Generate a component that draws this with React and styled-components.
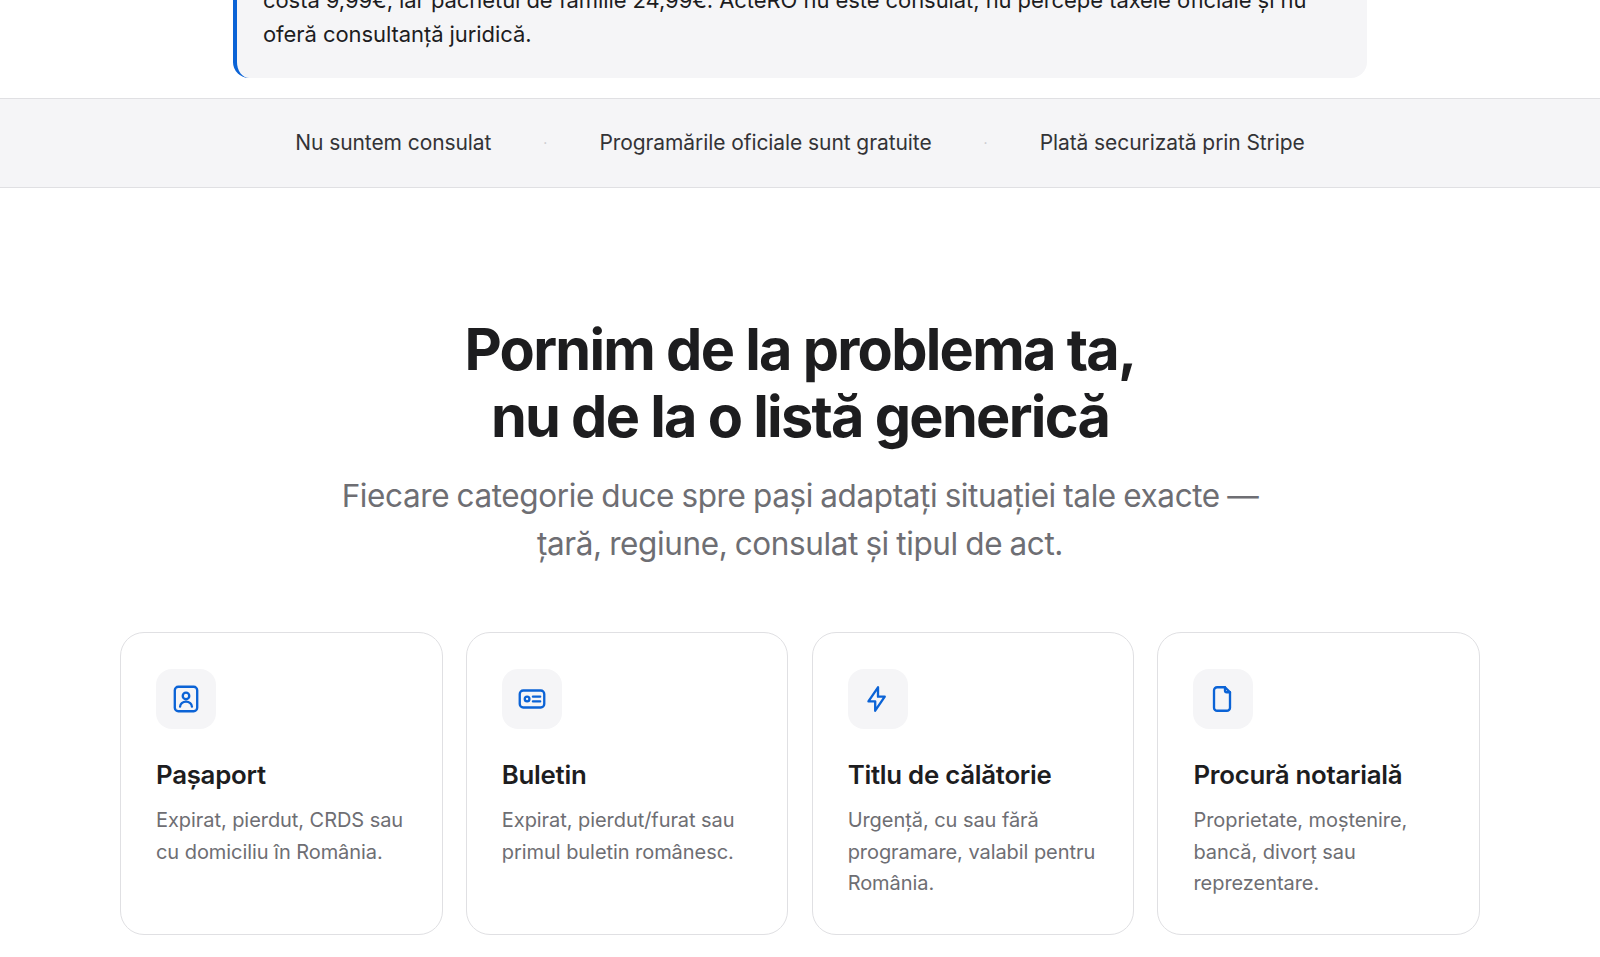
import React from "react";
import styled, { createGlobalStyle } from "styled-components";

const GlobalStyle = createGlobalStyle`
  * { box-sizing: border-box; }
  html, body { margin: 0; background: #fff; }
  body {
    font-family: Inter, "Liberation Sans", sans-serif;
    color: #1d1d1f;
    overflow: hidden;
  }
`;

const Page = styled.div`
  height: 957px;
  overflow: hidden;
`;

const NoticeWrap = styled.div`
  display: flex;
  justify-content: center;
  /* page is scrolled, the first line is cut by the window */
  margin-top: -27px;
  margin-bottom: 20px;
`;

const Notice = styled.p`
  width: 1134px;
  height: 105px;
  margin: 0;
  padding: 10px 52px 0 26px;
  background: #f5f5f7;
  border-left: 4px solid #0b63d6;
  border-radius: 16px;
  font-size: 22px;
  line-height: 34px;
  letter-spacing: -0.07px;
  color: #1d1d1f;
`;

const TrustBar = styled.div`
  height: 90px;
  padding-bottom: 1px;
  display: flex;
  align-items: center;
  justify-content: center;
  gap: 52px;
  background: #f5f5f7;
  border-top: 1px solid #e0e0e3;
  border-bottom: 1px solid #e0e0e3;
`;

const TrustItem = styled.span`
  font-size: 21px;
  letter-spacing: -0.08px;
  color: #333336;
`;

const Dot = styled.span`
  font-size: 14px;
  color: #c8c8cc;
`;

const Section = styled.section`
  padding-top: 128px;
  display: flex;
  flex-direction: column;
  align-items: center;
`;

const Title = styled.h2`
  margin: 0;
  font-size: 57.6px;
  line-height: 67px;
  font-weight: 700;
  letter-spacing: -0.03em;
  text-align: center;
  color: #1d1d1f;
`;

const Lead = styled.p`
  margin: 22px 0 0;
  font-size: 31.5px;
  line-height: 48px;
  font-weight: 400;
  letter-spacing: -0.4px;
  word-spacing: -1px;
  text-align: center;
  color: #6e6e73;
`;

const Cards = styled.div`
  width: 1360px;
  margin-top: 64px;
  display: grid;
  grid-template-columns: repeat(4, 322.5px);
  justify-content: space-between;
`;

const Card = styled.article`
  height: 303px;
  padding: 36px 35px 35px;
  background: #fff;
  border: 1px solid #e0e0e3;
  border-radius: 24px;
`;

const IconBox = styled.div`
  width: 60px;
  height: 60px;
  display: flex;
  align-items: center;
  justify-content: center;
  background: #f5f5f7;
  border-radius: 16px;
  color: #0b63d6;
`;

const CardTitle = styled.h3`
  margin: 28px 0 0;
  font-size: 25.8px;
  line-height: 36px;
  font-weight: 600;
  letter-spacing: -0.01em;
  color: #1d1d1f;
`;

const CardText = styled.p`
  margin: 12px 0 0;
  font-size: 20px;
  line-height: 31.5px;
  letter-spacing: -0.06px;
  color: #6e6e73;
`;

const Glyph = ({ children }) => (
  <svg width="28" height="28" viewBox="0 0 24 24" fill="none" stroke="currentColor" strokeWidth="2" strokeLinecap="round" strokeLinejoin="round">
    {children}
  </svg>
);

const PassportIcon = () => (
  <Glyph>
    <rect x="2.4" y="1.5" width="19.2" height="21" rx="3" />
    <circle cx="12" cy="9.4" r="2.8" />
    <path d="M6.9 18.6a5.1 4.400 0 0 1 10.200 0" />
  </Glyph>
);

const IdIcon = () => (
  <Glyph>
    <rect x="1.5" y="4.7" width="21" height="14.600" rx="3" />
    <circle cx="7.8" cy="12" r="2" />
    <path d="M12.800 9.900H19M12.800 14.100H19" />
  </Glyph>
);

const BoltIcon = () => (
  <Glyph>
    <path d="M12 2v8h5.800L9.600 22v-8H3.800L12 2z" />
  </Glyph>
);

const FileIcon = () => (
  <Glyph>
    <path d="M7 1.900h6.700L18 6.200v13.200a2.700 2.700 0 0 1-2.700 2.700H7a2.700 2.700 0 0 1-2.700-2.700V4.600A2.700 2.700 0 0 1 7 1.900z" />
    <path d="M13.700 1.900v2.800a1.500 1.500 0 0 0 1.500 1.500H18" />
  </Glyph>
);

const categories = [
  { title: "Pașaport", text: "Expirat, pierdut, CRDS sau cu domiciliu în România.", icon: <PassportIcon /> },
  { title: "Buletin", text: "Expirat, pierdut/furat sau primul buletin românesc.", icon: <IdIcon /> },
  { title: "Titlu de călătorie", text: "Urgență, cu sau fără programare, valabil pentru România.", icon: <BoltIcon /> },
  { title: "Procură notarială", text: "Proprietate, moștenire, bancă, divorț sau reprezentare.", icon: <FileIcon /> },
];

export default function App() {
  return (
    <Page>
      <GlobalStyle />
      <NoticeWrap>
        <Notice>
          costă 9,99€, iar pachetul de familie 24,99€. ActeRO nu este consulat, nu percepe taxele oficiale și nu oferă consultanță juridică.
        </Notice>
      </NoticeWrap>
      <TrustBar>
        <TrustItem>Nu suntem consulat</TrustItem>
        <Dot>·</Dot>
        <TrustItem>Programările oficiale sunt gratuite</TrustItem>
        <Dot>·</Dot>
        <TrustItem>Plată securizată prin Stripe</TrustItem>
      </TrustBar>
      <Section>
        <Title>
          Pornim de la problema ta,
          <br />
          nu de la o listă generică
        </Title>
        <Lead>
          Fiecare categorie duce spre pași adaptați situației tale exacte —
          <br />
          țară, regiune, consulat și tipul de act.
        </Lead>
        <Cards>
          {categories.map((item) => (
            <Card key={item.title}>
              <IconBox>{item.icon}</IconBox>
              <CardTitle>{item.title}</CardTitle>
              <CardText>{item.text}</CardText>
            </Card>
          ))}
        </Cards>
      </Section>
    </Page>
  );
}
